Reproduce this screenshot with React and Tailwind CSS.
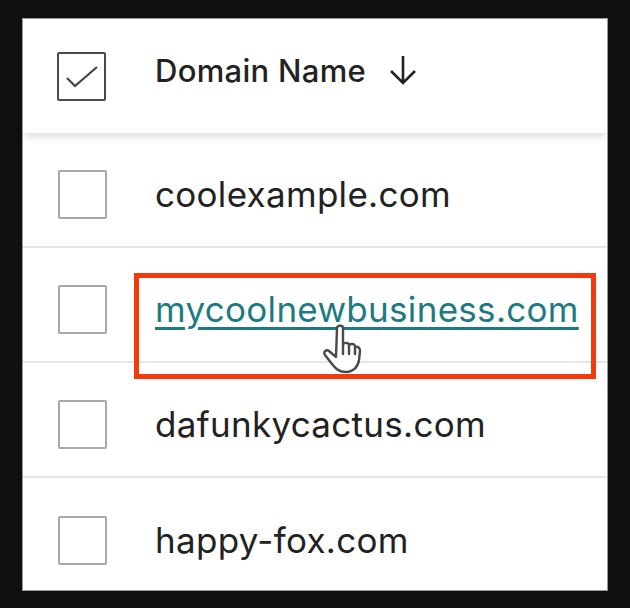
const font = { fontFamily: '"Inter", "Liberation Sans", sans-serif' };

function Box({ checked }) {
  return (
    <div className={`flex h-[49px] w-[49px] shrink-0 items-center justify-center rounded-[2px] border-[2px] bg-white ${checked ? "border-[#4a4a4a]" : "border-[#a8a8a8]"}`}>
      {checked && (
        <svg width="36" height="30" viewBox="0 0 36 30" fill="none" stroke="#444" strokeWidth="2.2">
          <path d="M3 17 L11 25 L33 6" />
        </svg>
      )}
    </div>
  );
}

function Row({ name, link, last }) {
  return (
    <div className={`relative flex h-[115px] items-center gap-[48px] pl-[35px] pt-[10px] ${last ? "" : "border-b-2 border-[#e6e6e6]"}`}>
      <Box />
      {link ? (
        <a className="text-[35px] leading-none tracking-[0.3px] text-[#1c7a80] underline decoration-[3px] underline-offset-[5px]">{name}</a>
      ) : (
        <span className="text-[35px] leading-none tracking-[0.3px] text-[#222222]">{name}</span>
      )}
    </div>
  );
}

export default function App() {
  return (
    <div className="h-[608px] w-[630px] bg-[#0f0f0f] pl-[22px] pr-[22px] pt-[18px] pb-[17px]" style={font}>
      <div className="relative h-[573px] w-[586px] overflow-hidden border border-[#999] bg-white">
        <div className="relative flex h-[114px] items-center gap-[49px] pl-[34px] shadow-[0_5px_7px_-1px_rgba(0,0,0,0.13)]">
          <Box checked />
          <div className="flex -translate-y-[6px] items-center gap-[23px]">
            <span className="text-[31px] font-medium leading-none tracking-[0.3px] text-[#222222]">Domain Name</span>
            <svg width="28" height="32" viewBox="0 0 28 32" fill="none" stroke="#222" strokeWidth="2.6">
              <path d="M14 2 V29 M2 17 L14 29 L26 17" />
            </svg>
          </div>
        </div>
        <Row name="coolexample.com" />
        <Row name="mycoolnewbusiness.com" link />
        <Row name="dafunkycactus.com" />
        <Row name="happy-fox.com" last />
        <div className="absolute left-[111px] top-[254px] h-[106px] w-[462px] border-[5px] border-[#f23a0c]" />
        <svg className="absolute left-[299px] top-[305px]" width="42" height="50" viewBox="0 0 42 50" fill="white" stroke="#4a4a4a" strokeWidth="2.4" strokeLinejoin="round" strokeLinecap="round">
          <path d="M15 4 C15 1 21 1 21 4 L21 20 C24 18 27 19 27 21 C30 19 33 20 33 23 C36 22 38 24 38 27 L37 36 C36 43 31 48 24 48 C17 48 14 45 10 40 L3 31 C1 28 4 25 7 27 L14 33 Z" />
          <path d="M21 20 L21 30 M27 21 L27 30 M33 23 L33 30" />
        </svg>
      </div>
    </div>
  );
}
